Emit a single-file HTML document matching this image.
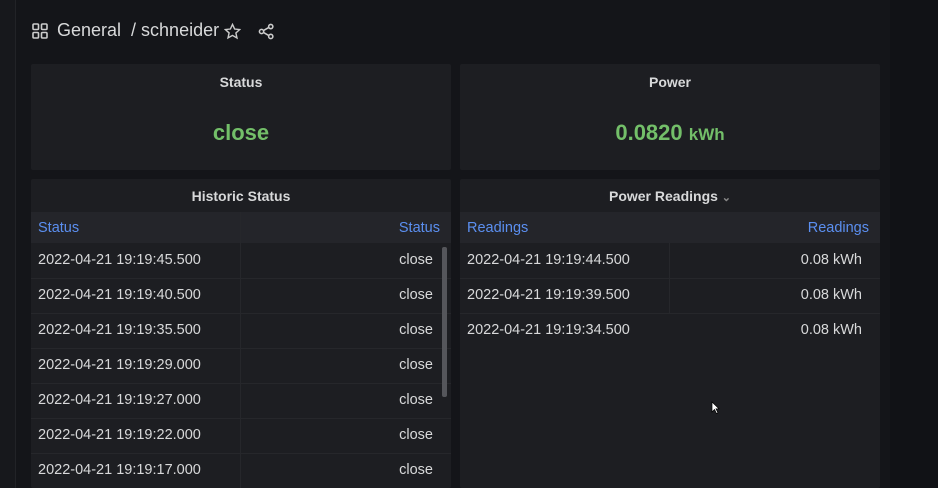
<!DOCTYPE html>
<html style="overflow:hidden;height:488px"><head><style>
body{margin:0;width:938px;height:488px;overflow:hidden;background:#141519;font-family:"Liberation Sans",sans-serif;position:relative}
.side{position:absolute;left:0;top:0;width:15px;height:488px;background:#17181c;border-right:1px solid #222327}
.right{position:absolute;left:890px;top:0;width:48px;height:488px;background:#111216}
.p{position:absolute;background:#1d1e22;border-radius:2px;overflow:hidden}
.t{position:absolute;left:0;right:0;text-align:center;color:#d8d9da;font-size:14px;font-weight:bold}
.hdr{position:absolute;left:0;right:0;top:33px;height:31px;background:#24252a;color:#5b8ff0;font-size:14.5px}
.row{position:absolute;left:0;right:0;height:35px;border-bottom:1px solid #26272b;color:#d8d9da;font-size:14.5px;line-height:35px}
.l{position:absolute;left:7px}.r{position:absolute}
</style></head><body>
<div class="side"></div><div class="right"></div>
<svg style="position:absolute;left:32px;top:23px" width="16" height="16" viewBox="0 0 16 16" fill="none" stroke="#ccc" stroke-width="1.6"><rect x="1" y="1" width="5.5" height="5.5" rx="1"/><rect x="9.5" y="1" width="5.5" height="5.5" rx="1"/><rect x="1" y="9.5" width="5.5" height="5.5" rx="1"/><rect x="9.5" y="9.5" width="5.5" height="5.5" rx="1"/></svg>
<div style="position:absolute;left:57px;top:20px;color:#d8d9da;font-size:18px">General&nbsp; / schneider</div>
<svg style="position:absolute;left:224px;top:23px" width="17" height="17" viewBox="0 0 24 24" fill="none" stroke="#ccc" stroke-width="2"><path d="M12 2l3 6.5 7 .8-5.2 4.8 1.5 7L12 17.5 5.7 21l1.5-7L2 9.3l7-.8z"/></svg>
<svg style="position:absolute;left:258px;top:23px" width="17" height="17" viewBox="0 0 24 24" fill="none" stroke="#ccc" stroke-width="2.2"><circle cx="18" cy="5" r="3"/><circle cx="5" cy="12" r="3"/><circle cx="18" cy="19" r="3"/><path d="M8 10.5l7-4M8 13.5l7 4"/></svg>

<div class="p" style="left:31px;top:64px;width:420px;height:106px">
<div class="t" style="top:10px">Status</div>
<div style="position:absolute;left:0;right:0;top:56px;text-align:center;color:#73bf69;font-size:22px;font-weight:bold">close</div></div>
<div class="p" style="left:460px;top:64px;width:420px;height:106px">
<div class="t" style="top:10px">Power</div>
<div style="position:absolute;left:0;right:0;top:56px;text-align:center;color:#73bf69;font-size:22px;font-weight:bold">0.0820 <span style="font-size:17px">kWh</span></div></div>

<div class="p" style="left:31px;top:179px;width:420px;height:309px">
<div class="t" style="top:9px">Historic Status</div>
<div class="hdr"><span class="l" style="top:8px">Status</span><span class="r" style="right:11px;top:8px">Status</span></div>
<div style="position:absolute;left:209px;top:33px;width:1px;height:290px;background:#26272b"></div>
<div class="row" style="top:64px"><span class="l">2022-04-21 19:19:45.500</span><span class="r" style="right:18px">close</span></div>
<div class="row" style="top:99px"><span class="l">2022-04-21 19:19:40.500</span><span class="r" style="right:18px">close</span></div>
<div class="row" style="top:134px"><span class="l">2022-04-21 19:19:35.500</span><span class="r" style="right:18px">close</span></div>
<div class="row" style="top:169px"><span class="l">2022-04-21 19:19:29.000</span><span class="r" style="right:18px">close</span></div>
<div class="row" style="top:204px"><span class="l">2022-04-21 19:19:27.000</span><span class="r" style="right:18px">close</span></div>
<div class="row" style="top:239px"><span class="l">2022-04-21 19:19:22.000</span><span class="r" style="right:18px">close</span></div>
<div class="row" style="top:274px"><span class="l">2022-04-21 19:19:17.000</span><span class="r" style="right:18px">close</span></div>
<div style="position:absolute;left:411px;top:68px;width:5px;height:150px;background:#55565b;border-radius:2px;z-index:2"></div>
</div>

<div class="p" style="left:460px;top:179px;width:420px;height:309px">
<div class="t" style="top:9px">Power Readings <span style="color:#888;font-size:11px">&#8964;</span></div>
<div class="hdr"><span class="l" style="top:8px">Readings</span><span class="r" style="right:11px;top:8px">Readings</span></div>
<div style="position:absolute;left:209px;top:64px;width:1px;height:70px;background:#26272b"></div>
<div class="row" style="top:64px"><span class="l">2022-04-21 19:19:44.500</span><span class="r" style="right:18px">0.08 kWh</span></div>
<div class="row" style="top:99px"><span class="l">2022-04-21 19:19:39.500</span><span class="r" style="right:18px">0.08 kWh</span></div>
<div class="row" style="top:134px;border:none"><span class="l">2022-04-21 19:19:34.500</span><span class="r" style="right:18px">0.08 kWh</span></div>
</div>
<svg style="position:absolute;left:711px;top:401px" width="9" height="14" viewBox="0 0 9 14"><path d="M1 1v10l2.5-2.5 2 4 1.5-.7-2-4H8z" fill="#fff" stroke="#000" stroke-width=".7"/></svg>
</body></html>
